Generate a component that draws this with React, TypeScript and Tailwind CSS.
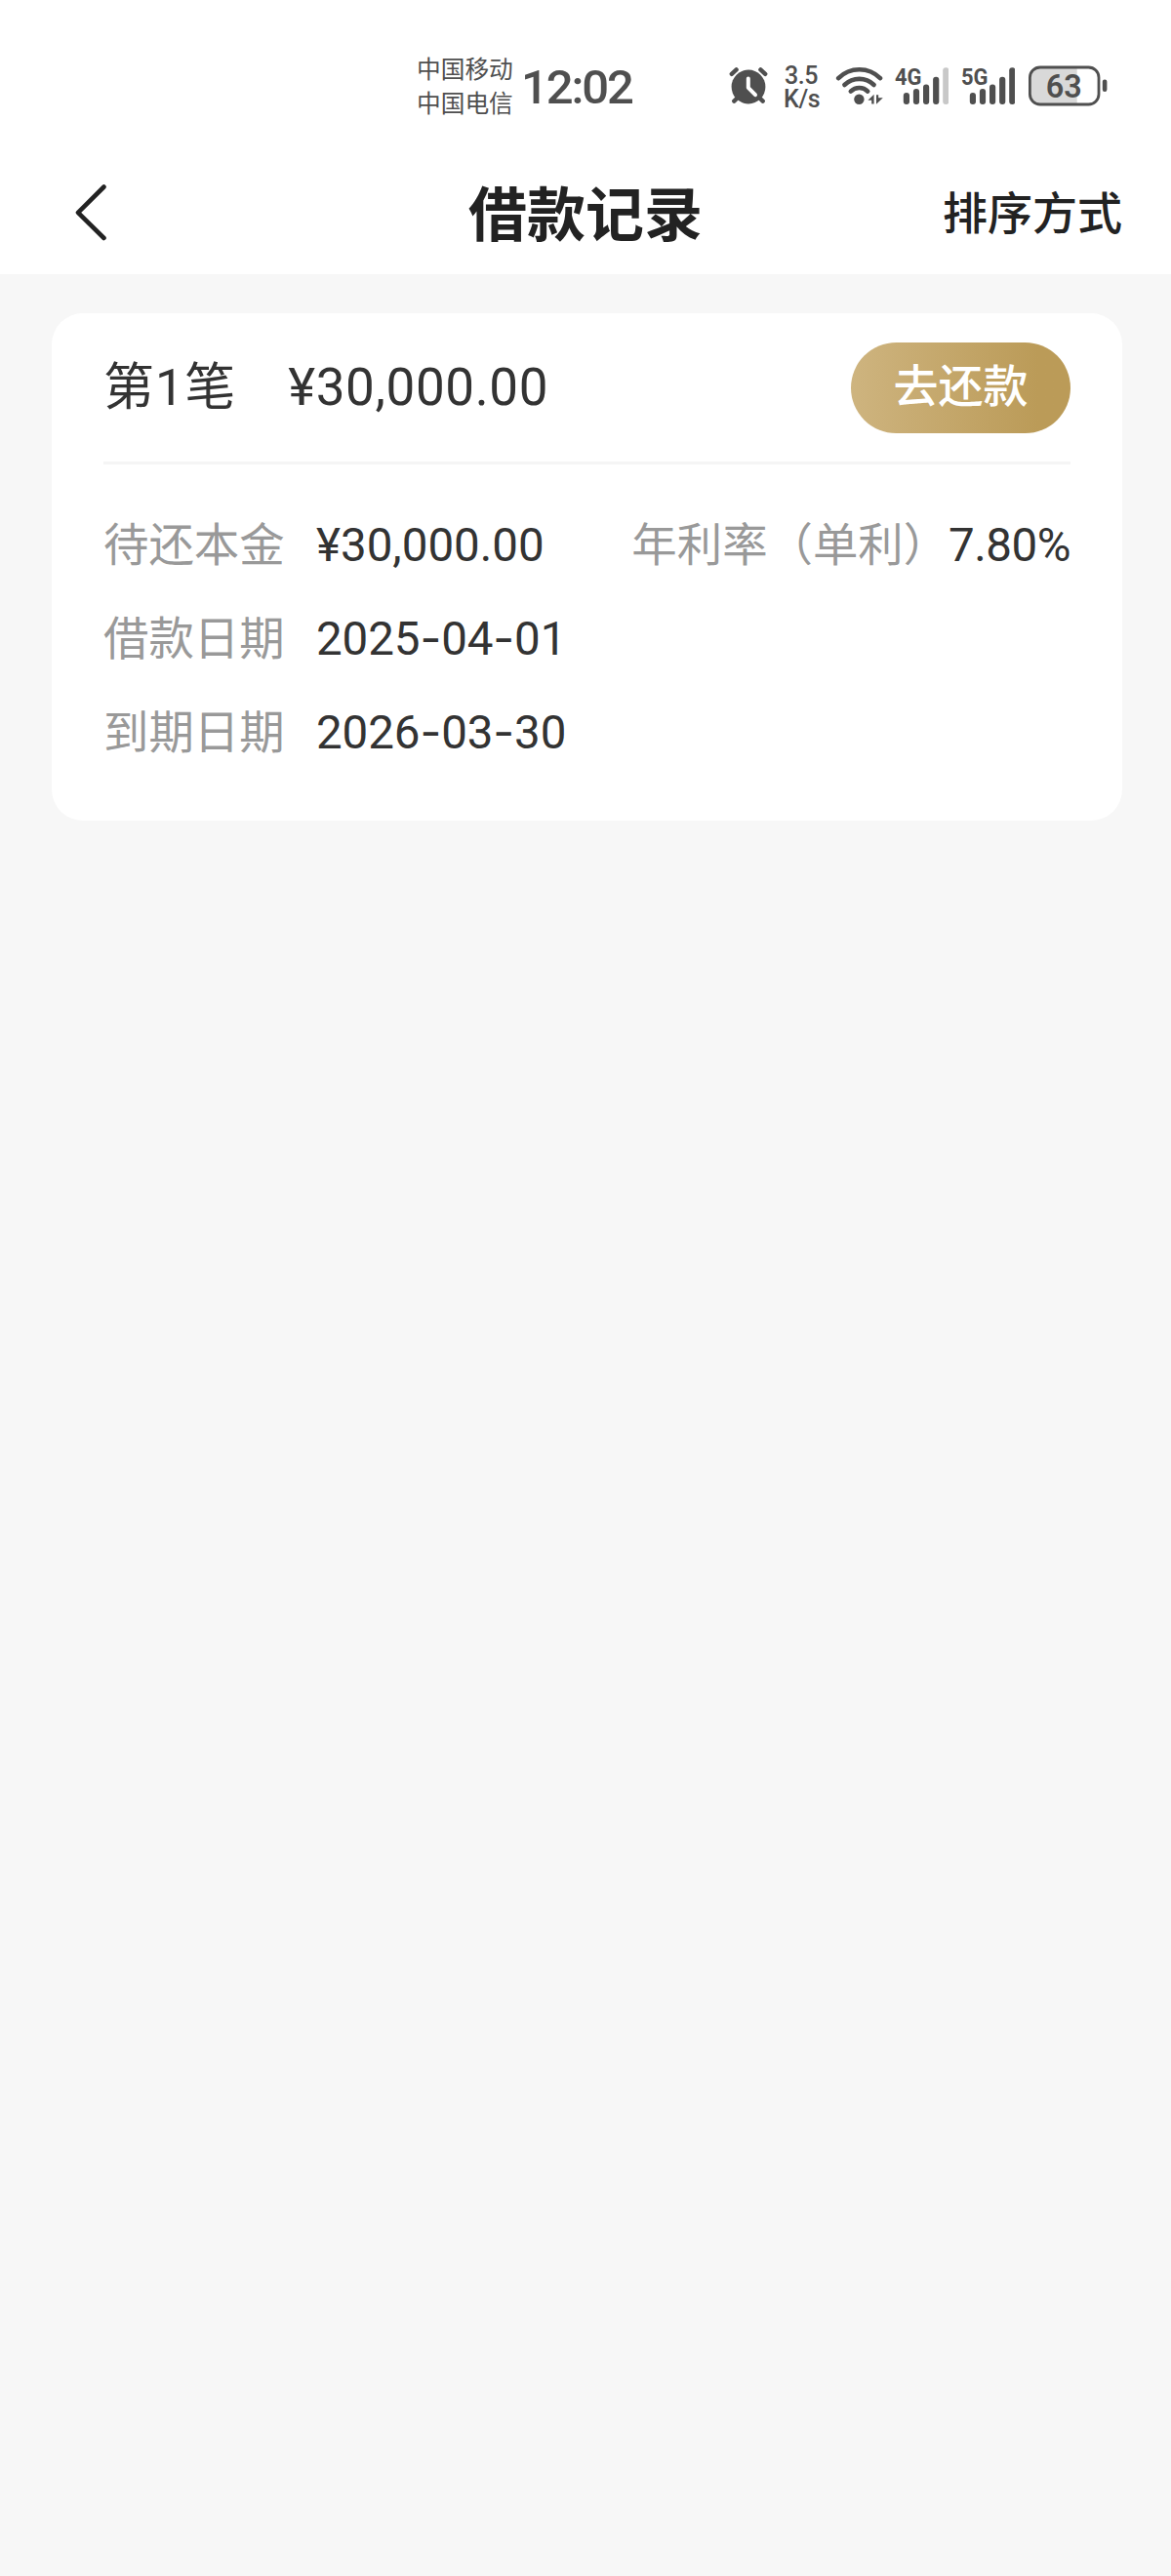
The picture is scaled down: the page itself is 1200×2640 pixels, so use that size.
interface Loan {
  index: number
  amount: string
  principal: string
  rate: string
  borrowDate: string
  dueDate: string
}

const loans: Loan[] = [
  {
    index: 1,
    amount: '¥30,000.00',
    principal: '¥30,000.00',
    rate: '7.80%',
    borrowDate: '2025-04-01',
    dueDate: '2026-03-30',
  },
]

const barTops = [95, 91, 86.5, 78.7, 69.3]

function AlarmIcon() {
  return (
    <svg width="42" height="42" viewBox="0 0 42 42" className="shrink-0">
      <g stroke="#4f4f4f" strokeLinecap="round" fill="none">
        <path d="M3.8 8.8 8.6 4.4M38.2 8.8 33.4 4.4" strokeWidth="4.4" />
        <path d="M10 33 6.3 36.6M32 33 35.7 36.6" strokeWidth="4.4" />
      </g>
      <circle cx="21" cy="22" r="17.4" fill="#4f4f4f" />
      <path
        d="M20.8 13.6V22.8L28 30.2"
        stroke="#fff"
        strokeWidth="4"
        strokeLinecap="round"
        strokeLinejoin="round"
        fill="none"
      />
    </svg>
  )
}

function WifiIcon() {
  return (
    <svg width="50" height="42" viewBox="856 67 50 42" className="shrink-0">
      <g fill="none" stroke="#4f4f4f" strokeWidth="4.6" strokeLinecap="round">
        <path d="M859.2 80.2Q868 71.3 880.6 71.3T902 80.2" />
        <path d="M865.4 87Q872 80.9 880.6 80.9T895.6 87" />
        <path d="M871.8 93.6Q875.4 90 880.6 90T889.2 93.6" />
      </g>
      <circle cx="880.4" cy="101.7" r="5.2" fill="#4f4f4f" />
      <path d="M889.4 102.8 895.6 96.8V106.4H893.2V102.8Z" fill="#4f4f4f" />
      <path d="M904.8 100.2 898 106.8V97.2H900.2V100.2Z" fill="#4f4f4f" />
    </svg>
  )
}

function SignalIcon({ label, level }: { label: string; level: number }) {
  return (
    <svg width="56" height="54" viewBox="916 61 56 54" className="shrink-0">
      {barTops.map((top, i) => (
        <rect
          key={top}
          x={925.8 + i * 10.1}
          y={top}
          width="6.2"
          height={107 - top}
          rx="3"
          fill={i < level ? '#4f4f4f' : '#c8c8c8'}
        />
      ))}
      <text
        x="917"
        y="87.4"
        textLength="27.5"
        lengthAdjust="spacingAndGlyphs"
        fill="#4f4f4f"
        className="font-['Roboto',sans-serif] text-[24.5px] font-bold"
      >
        {label}
      </text>
    </svg>
  )
}

function BatteryIcon({ level }: { level: number }) {
  return (
    <svg width="82" height="42" viewBox="1053 67 82 42" className="shrink-0">
      <path d="M1103.7 69H1066A10.5 10.5 0 0 0 1055.5 79.5V96.5A10.5 10.5 0 0 0 1066 107H1103.7Z" fill="#d9d9d9" />
      <rect x="1055.4" y="69" width="70.6" height="38" rx="10.5" fill="none" stroke="#4f4f4f" strokeWidth="2.8" />
      <rect x="1129.8" y="81.6" width="4.6" height="12.4" rx="2.2" fill="#4f4f4f" />
      <text
        x="1090.2"
        y="100.4"
        textAnchor="middle"
        textLength="37"
        lengthAdjust="spacingAndGlyphs"
        fill="#4f4f4f"
        className="font-['Roboto',sans-serif] text-[34px] font-semibold"
      >
        {level}
      </text>
    </svg>
  )
}

function StatusBar() {
  return (
    <div className="flex h-[176px] items-center pl-[427px] text-[#4f4f4f]">
      <div className="w-[107px] pt-[2px] text-[24.7px] leading-[35px]">
        <div>中国移动</div>
        <div>中国电信</div>
      </div>
      <div className="w-[212px] pt-[3px] text-[49px] leading-none font-medium tracking-[-2.1px]">
        12:02
      </div>
      <AlarmIcon />
      <div className="ml-[15px] w-[53px] pt-[3px] text-[25px] leading-[24px] font-medium tracking-[-0.4px]">
        <div className="pl-[1px]">3.5</div>
        <div>K/s</div>
      </div>
      <WifiIcon />
      <div className="ml-[10px] flex">
        <SignalIcon label="4G" level={4} />
      </div>
      <div className="ml-[12px] flex">
        <SignalIcon label="5G" level={5} />
      </div>
      <div className="ml-[13px] flex">
        <BatteryIcon level={63} />
      </div>
    </div>
  )
}

function Header() {
  return (
    <header className="grid h-[105px] grid-cols-3 items-center pr-[50px] pb-[21px] pl-[50px] text-[#222]">
      <button className="justify-self-start pl-[25px]" aria-label="返回">
        <svg width="34" height="60" viewBox="0 0 34 60">
          <path
            d="M31.5 3.5 5 29.8 31.5 56"
            fill="none"
            stroke="#222"
            strokeWidth="4.6"
            strokeLinecap="round"
            strokeLinejoin="round"
          />
        </svg>
      </button>
      <h1 className="pt-[7px] text-center text-[60px] leading-none font-bold">借款记录</h1>
      <button className="justify-self-end pt-[2px] text-[46px] leading-none font-medium">排序方式</button>
    </header>
  )
}

// The dash is set wider than the digits' own hyphen
function DateText({ value }: { value: string }) {
  return (
    <span className="tracking-[-0.1px]">
      {value.split('-').map((part, i) => (
        <span key={i}>
          {i > 0 && <span className="font-['Inter',sans-serif] leading-none">-</span>}
          {part}
        </span>
      ))}
    </span>
  )
}

function LoanCard({ loan }: { loan: Loan }) {
  return (
    <section className="h-[520px] rounded-[32px] bg-white px-[53px]">
      <div className="flex h-[155px] items-center justify-between border-b-3 border-[#f5f5f5] text-[53px] leading-none text-[#333]">
        <div className="flex gap-[53px]">
          <span className="text-[52px] leading-[53px] tracking-[1px]">第{loan.index}笔</span>
          <span className="tracking-[0.6px]">{loan.amount}</span>
        </div>
        <button className="h-[93px] w-[225px] rounded-full bg-linear-to-r from-[#ceb47f] to-[#bb9b58] to-85% pb-[2px] text-[46px] font-medium text-white">
          去还款
        </button>
      </div>
      <div className="pt-[35px] text-[47.5px] leading-[96px] text-[#333]">
        <div className="flex justify-between">
          <div className="flex">
            <span className="w-[218px] text-[46.4px] text-[#999]">待还本金</span>
            <span>{loan.principal}</span>
          </div>
          <div className="flex">
            <span className="text-[46.4px] text-[#999]">年利率（单利）</span>
            <span className="tracking-[-0.5px]">{loan.rate}</span>
          </div>
        </div>
        <div className="flex">
          <span className="w-[218px] text-[46.4px] text-[#999]">借款日期</span>
          <DateText value={loan.borrowDate} />
        </div>
        <div className="flex">
          <span className="w-[218px] text-[46.4px] text-[#999]">到期日期</span>
          <DateText value={loan.dueDate} />
        </div>
      </div>
    </section>
  )
}

export default function App() {
  return (
    <div className="min-h-[2640px] w-[1200px] bg-[#f7f7f7] font-['Roboto','Noto_Sans_CJK_SC',sans-serif]">
      <div className="bg-white">
        <StatusBar />
        <Header />
      </div>
      <main className="pt-[40px] pr-[50px] pl-[53px]">
        {loans.map((loan) => (
          <LoanCard key={loan.index} loan={loan} />
        ))}
      </main>
    </div>
  )
}
